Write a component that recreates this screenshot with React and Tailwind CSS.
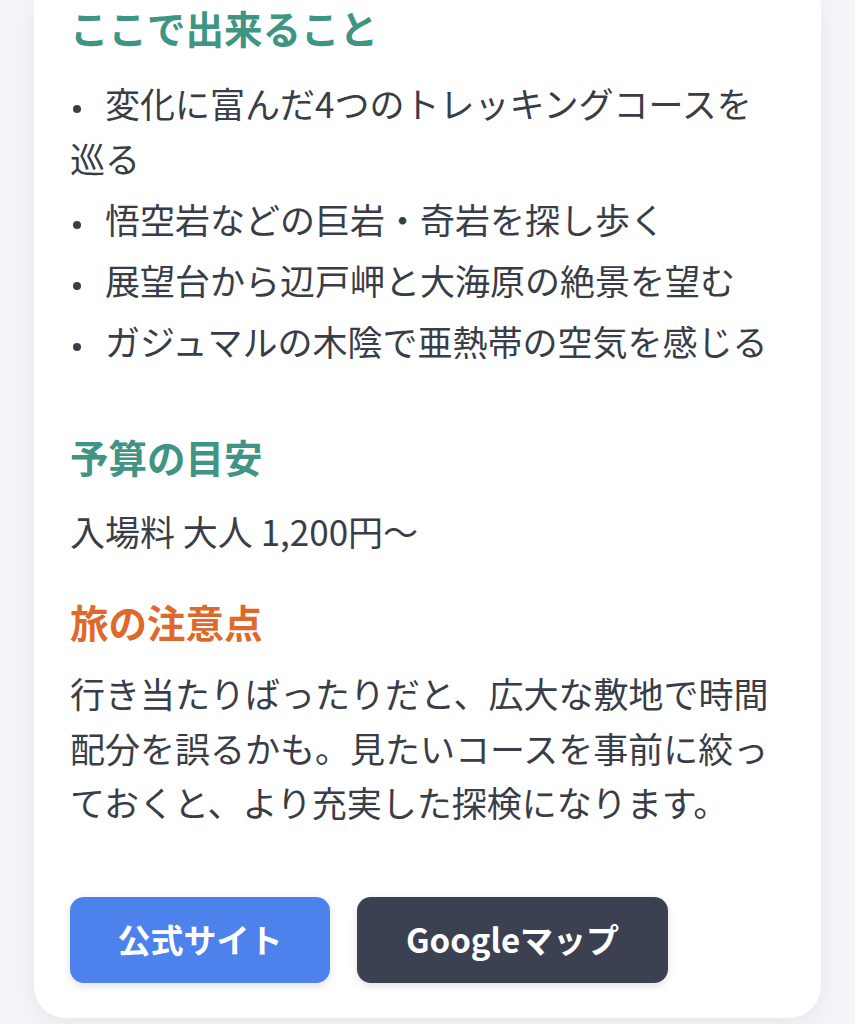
const DOING = [
  '変化に富んだ4つのトレッキングコースを巡る',
  '悟空岩などの巨岩・奇岩を探し歩く',
  '展望台から辺戸岬と大海原の絶景を望む',
  'ガジュマルの木陰で亜熱帯の空気を感じる',
];

export default function App() {
  return (
    <div className="min-h-screen bg-[#f4f5f8] px-[34px] pb-[6px] font-['Noto_Sans_CJK_JP','Noto_Sans',sans-serif] text-[#383d48]">
      <div className="bg-white rounded-b-[32px] shadow-[0_6px_24px_rgba(0,0,0,0.06)] px-[36px] pt-0 pb-[35px]">
        <h3 className="text-[38.5px] leading-[54px] font-bold text-[#3f9483]">ここで出来ること</h3>
        <ul className="mt-[21px] space-y-[6px] text-[35px] leading-[55px]">
          {DOING.map(t => (
            <li key={t}>
              <span className="inline-block w-[8px] h-[8px] ml-[3px] mr-[24px] rounded-full bg-[#383d48] align-middle" />
              {t}
            </li>
          ))}
        </ul>

        <h3 className="mt-[61px] text-[38.5px] leading-[54px] font-bold text-[#3f9483]">予算の目安</h3>
        <p className="mt-[20px] text-[35px] leading-[55px]">入場料 大人 1,200円～</p>

        <h3 className="mt-[36px] text-[38.5px] leading-[54px] font-bold text-[#dd6a2c]">旅の注意点</h3>
        <p className="mt-[18px] text-[35px] leading-[54.5px]">
          行き当たりばったりだと、広大な敷地で時間配分を誤るかも。見たいコースを事前に絞っておくと、より充実した探検になります。
        </p>

        <div className="mt-[67px] flex gap-[27px]">
          <button type="button" className="h-[86px] w-[260px] rounded-[14px] bg-[#4d82ec] text-white text-[33px] font-bold shadow-[0_3px_8px_rgba(0,0,0,0.12)]">
            公式サイト
          </button>
          <button type="button" className="h-[86px] w-[311px] rounded-[14px] bg-[#3b4150] text-white text-[33px] font-bold shadow-[0_3px_8px_rgba(0,0,0,0.12)]">
            Googleマップ
          </button>
        </div>
      </div>
    </div>
  );
}
